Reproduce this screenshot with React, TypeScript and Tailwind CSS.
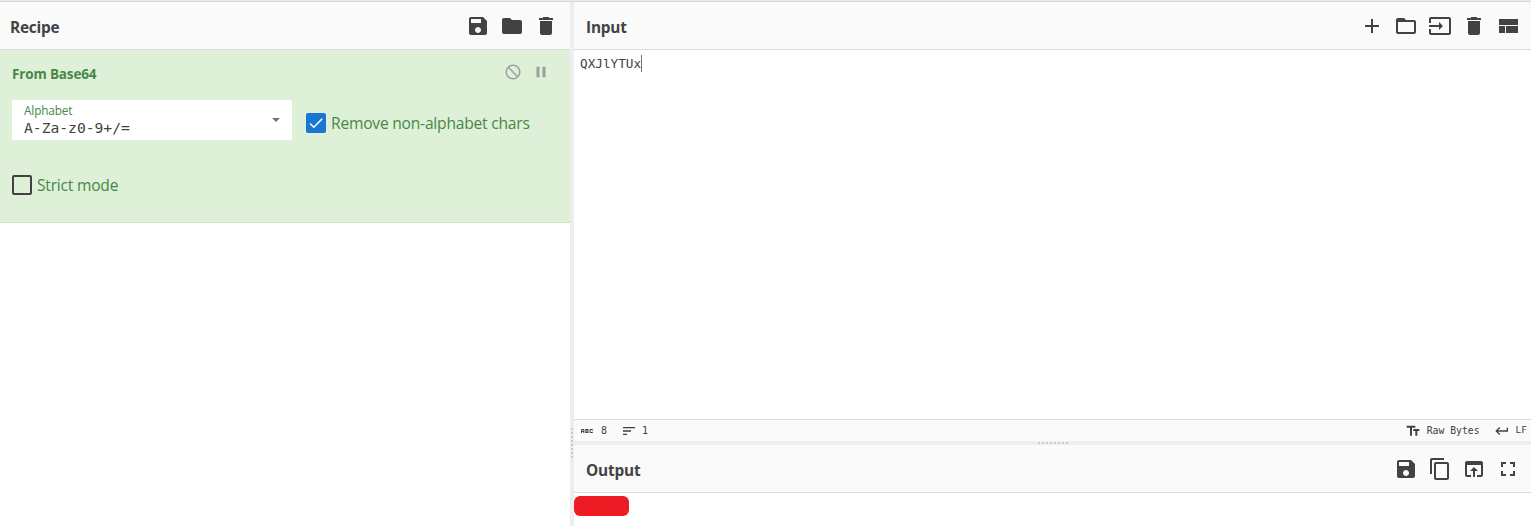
import type { ReactNode } from "react";

const paths = {
  save: "M17 3H5c-1.11 0-2 .9-2 2v14c0 1.1.89 2 2 2h14c1.1 0 2-.9 2-2V7l-4-4zm-5 16c-1.66 0-3-1.34-3-3s1.34-3 3-3 3 1.34 3 3-1.34 3-3 3zm3-10H5V5h10v4z",
  folder: "M10 4H4c-1.1 0-1.99.9-1.99 2L2 18c0 1.1.9 2 2 2h16c1.1 0 2-.9 2-2V8c0-1.1-.9-2-2-2h-8l-2-2z",
  trash: "M6 19c0 1.1.9 2 2 2h8c1.1 0 2-.9 2-2V7H6v12zM19 4h-3.5l-1-1h-5l-1 1H5v2h14V4z",
  add: "M19 13h-6v6h-2v-6H5v-2h6V5h2v6h6v2z",
  folderOpen: "M20 6h-8l-2-2H4c-1.1 0-1.99.9-1.99 2L2 18c0 1.1.9 2 2 2h16c1.1 0 2-.9 2-2V8c0-1.1-.9-2-2-2zm0 12H4V8h16v10z",
  input: "M21 3.01H3c-1.1 0-2 .9-2 2V9h2V4.99h18v14.03H3V15H1v4.01c0 1.1.9 1.98 2 1.98h18c1.1 0 2-.88 2-1.98v-14c0-1.11-.9-2-2-2zM11 16l4-4-4-4v3H1v2h10v3z",
  layout: "M3 19h6v-7H3v7zm7 0h12v-7H10v7zM3 5v6h19V5H3z",
  copy: "M16 1H4c-1.1 0-2 .9-2 2v14h2V3h12V1zm3 4H8c-1.1 0-2 .9-2 2v14c0 1.1.9 2 2 2h11c1.1 0 2-.9 2-2V7c0-1.1-.9-2-2-2zm0 16H8V7h11v14z",
  moveUp: "M19 4H5c-1.11 0-2 .9-2 2v12c0 1.1.89 2 2 2h4v-2H5V8h14v10h-4v2h4c1.1 0 2-.9 2-2V6c0-1.1-.89-2-2-2zm-7 6l-4 4h3v6h2v-6h3l-4-4z",
  fullscreen: "M7 14H5v5h5v-2H7v-3zm-2-4h2V7h3V5H5v5zm12 7h-3v2h5v-5h-2v3zM14 5v2h3v3h2V5h-5z",
  disable: "M12 2C6.48 2 2 6.48 2 12s4.48 10 10 10 10-4.48 10-10S17.52 2 12 2zm0 18c-4.42 0-8-3.58-8-8 0-1.85.63-3.55 1.69-4.9L16.9 18.31C15.55 19.37 13.85 20 12 20zm6.31-3.1L7.1 5.69C8.45 4.63 10.15 4 12 4c4.42 0 8 3.58 8 8 0 1.85-.63 3.55-1.69 4.9z",
  pause: "M6 19h4V5H6v14zm8-14v14h4V5h-4z",
  abc: "M21 11h-1.5v-.5h-2v3h2V13H21v1c0 .55-.45 1-1 1h-3c-.55 0-1-.45-1-1v-4c0-.55.45-1 1-1h3c.55 0 1 .45 1 1v1zM8 10v5H6.5v-1.5h-2V15H3v-5c0-.55.45-1 1-1h3c.55 0 1 .45 1 1zm-1.5.5h-2V12h2v-1.5zm7 1.5c.55 0 1 .45 1 1v1c0 .55-.45 1-1 1h-4V9h4c.55 0 1 .45 1 1v1c0 .55-.45 1-1 1zM11 10.5v.75h2v-.75h-2zm2 2.25h-2v.75h2v-.75z",
  lines: "M3 18h6v-2H3v2zM3 6v2h18V6H3zm0 7h12v-2H3v2z",
  text: "M2.5 4v3h5v12h3V7h5V4h-13zm19 5h-9v3h3v7h3v-7h3V9z",
  enter: "M19 7v4H5.83l3.58-3.59L8 6l-6 6 6 6 1.41-1.41L5.83 13H21V7h-2z",
  check: "M9 16.17L4.83 12l-1.42 1.41L9 19 21 7l-1.41-1.41z",
};

function Icon({ name, className = "size-6" }: { name: keyof typeof paths; className?: string }) {
  return (
    <svg viewBox="0 0 24 24" fill="currentColor" className={`shrink-0 ${className}`}>
      <path d={paths[name]} />
    </svg>
  );
}

function TitleBar({ title, icons, className }: { title: string; icons: (keyof typeof paths)[]; className: string }) {
  return (
    <div className={`flex h-12 shrink-0 items-center justify-between border-b border-[#ddd] bg-[#fafafa] ${className}`}>
      <h2 className="pt-[5px] font-['Open_Sans','Noto_Sans',sans-serif] text-[15.4px] leading-6 font-bold tracking-[-0.2px]">{title}</h2>
      <div className="flex gap-[10px]">
        {icons.map((name) => (
          <Icon key={name} name={name} />
        ))}
      </div>
    </div>
  );
}

function Mono({ children, className }: { children: ReactNode; className: string }) {
  return <span className={`font-['DejaVu_Sans_Mono',monospace] whitespace-pre ${className}`}>{children}</span>;
}

function Dots({ vertical = false }: { vertical?: boolean }) {
  return (
    <div className={`flex gap-[2px] ${vertical ? "flex-col" : ""}`}>
      {Array.from({ length: 8 }, (_, i) => (
        <i key={i} className="size-[2px] bg-[#ccc]" />
      ))}
    </div>
  );
}

export default function App() {
  return (
    <div className="flex h-[526px] w-[1531px] flex-col overflow-hidden bg-white font-['Open_Sans','Noto_Sans',sans-serif] text-[#424242]">
      <div className="h-[2px] shrink-0 border-b border-[#d3ddcf] bg-[#e4eee0]" />
      <div className="flex min-h-0 flex-1">
        <section className="flex w-[570px] flex-col">
          <TitleBar title="Recipe" icons={["save", "folder", "trash"]} className="pr-3 pl-[10px]" />
          <div className="h-[173px] border-b border-[#d0e5c4] bg-[#dff0d8] px-3 text-[#468847]">
            <div className="flex h-[50px] items-start justify-between pr-2">
              <h3 className="pt-[13px] text-[13.5px] leading-[22px] font-bold tracking-[-0.15px]">From Base64</h3>
              <div className="flex gap-[10px] pt-[13px] text-[#9e9e9e]">
                <Icon name="disable" className="size-[18px]" />
                <Icon name="pause" className="size-[18px]" />
              </div>
            </div>
            <div className="flex h-10 items-start">
              <div className="flex h-10 w-[280px] items-center justify-between rounded-tr-[3px] bg-white pr-3 pl-3">
                <div className="flex flex-col pb-px">
                  <span className="text-[11.8px] leading-[17px] tracking-[-0.15px]">Alphabet</span>
                  <Mono className="text-[14.65px] leading-[18px] text-[#424242]">A-Za-z0-9+/=</Mono>
                </div>
                <i className="border-x-4 border-t-4 border-x-transparent border-t-[#757575]" />
              </div>
              <div className="mt-[13px] ml-[14px] flex items-center gap-[5px]">
                <span className="flex size-5 items-center justify-center rounded-[2px] bg-[#1976d2] text-white">
                  <Icon name="check" className="size-[18px]" />
                </span>
                <span className="text-[15.6px] leading-5 tracking-[-0.22px]">Remove non-alphabet chars</span>
              </div>
            </div>
            <div className="mt-[35px] flex items-center gap-[5px]">
              <span className="size-5 rounded-[2px] border-2 border-[#424242]" />
              <span className="text-[15.6px] leading-5 tracking-[-0.22px]">Strict mode</span>
            </div>
          </div>
        </section>
        <div className="flex w-1 shrink-0 flex-col items-center bg-[#eee] pt-[426px]">
          <Dots vertical />
        </div>
        <section className="flex min-w-0 flex-1 flex-col">
          <TitleBar title="Input" icons={["add", "folderOpen", "input", "trash", "layout"]} className="pr-[11px] pl-3" />
          <div className="flex h-[369px] shrink-0 items-start pt-[5px] pl-[6px]">
            <Mono className="text-[12.7px] leading-[18px]">QXJlYTUx</Mono>
            <i className="h-[17px] w-px bg-[#757575]" />
          </div>
          <div className="flex h-[22px] shrink-0 items-center justify-between border-t border-[#ddd] bg-[#fafafa] pr-[4px] pl-[5px]">
            <div className="flex items-center">
              <Icon name="abc" className="mt-px size-4" />
              <Mono className="ml-[6px] text-[10px]">8</Mono>
              <Icon name="lines" className="ml-[14px] size-4" />
              <Mono className="ml-[5px] text-[10px]">1</Mono>
            </div>
            <div className="flex items-center">
              <Icon name="text" className="mt-px size-4" />
              <Mono className="ml-[6px] pt-px text-[9.75px]">Raw Bytes</Mono>
              <Icon name="enter" className="mt-px ml-[14px] size-4" />
              <Mono className="ml-[6px] text-[9.5px]">LF</Mono>
            </div>
          </div>
          <div className="flex h-1 shrink-0 items-center justify-center bg-[#eee]">
            <Dots />
          </div>
          <TitleBar title="Output" icons={["save", "copy", "moveUp", "fullscreen"]} className="pr-[11px] pl-3" />
          <div className="min-h-0 flex-1 bg-white pt-[3px]">
            <div className="h-5 w-[55px] rounded-[6px] bg-[#ed1c24]" />
          </div>
        </section>
      </div>
    </div>
  );
}
